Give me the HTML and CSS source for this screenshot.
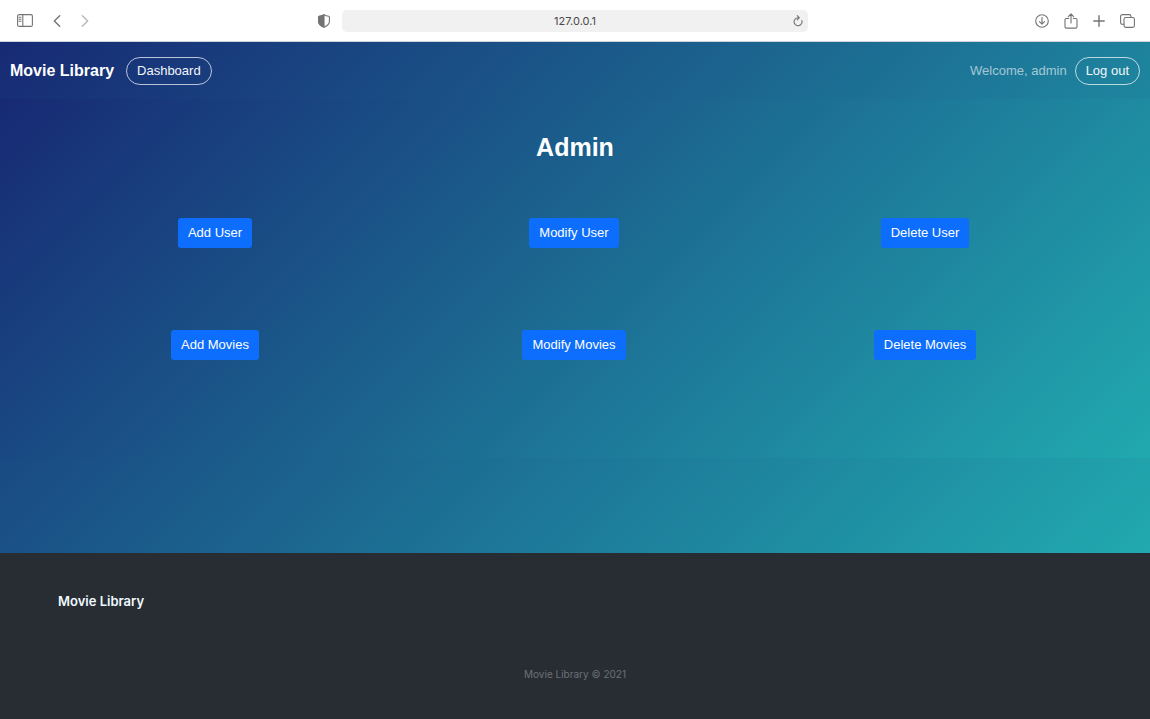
FILE: index.html
```html
<!DOCTYPE html>
<html lang="en">
<head>
<meta charset="utf-8">
<title>Movie Library</title>
<link rel="stylesheet" href="styles.css">
</head>
<body>
<div class="toolbar">
  <div class="tools tools-left">
    <button class="tool" aria-label="Sidebar"><svg width="16" height="13" viewBox="0 0 16 13"><rect x=".6" y=".6" width="14.8" height="11.8" rx="1.5"/><path d="M5.8 .6v11.8M2 3.2h2M2 5.2h2M2 7.2h2"/></svg></button>
    <div class="history">
      <button class="tool" aria-label="Back"><svg width="8" height="12" viewBox="0 0 8 12"><path class="bold" d="M6.7.8 1.3 6l5.4 5.2"/></svg></button>
      <button class="tool tool-off" aria-label="Forward"><svg width="8" height="12" viewBox="0 0 8 12"><path class="bold" d="M1.3.8 6.7 6l-5.4 5.2"/></svg></button>
    </div>
    <button class="tool shield" aria-label="Privacy report"><svg width="12" height="14" viewBox="0 0 12 14"><path d="M6 .8C4.700 1.700 2.800 2.200 1.200 2.300.7 2.400.6 2.600.6 3.100v4.500c0 2.800 2.300 4.400 5.400 5.700 3.100-1.300 5.400-2.900 5.400-5.700V3.100c0-.5-.1-.7-.6-.8C9.200 2.200 7.300 1.700 6 .8Z"/><path class="solid" d="M6 .8C4.700 1.700 2.800 2.200 1.200 2.300.7 2.400.6 2.600.6 3.100v4.500c0 2.800 2.300 4.400 5.400 5.700Z"/></svg></button>
  </div>
  <div class="address">
    <input class="url" type="text" value="127.0.0.1" aria-label="Address">
    <button class="tool reload" aria-label="Reload"><svg width="10" height="12" viewBox="0 0 10 12"><path d="M8.900 5.600A4 4 0 1 1 5 2.700h1.300M4.200.6l2.100 2.100-2.100 2.100"/></svg></button>
  </div>
  <div class="tools tools-right">
    <button class="tool" aria-label="Downloads"><svg width="14" height="14" viewBox="0 0 14 14"><circle cx="7" cy="7" r="6.300"/><path d="M7 3.600v6.400M4.500 7.700 7 10.200l2.500-2.500"/></svg></button>
    <button class="tool" aria-label="Share"><svg width="14" height="16" viewBox="0 0 14 16"><path d="M4.700 5.500H2.300c-.8 0-1.300.5-1.300 1.300v7c0 .8.500 1.300 1.300 1.300h9.400c.8 0 1.300-.5 1.300-1.300v-7c0-.8-.5-1.300-1.300-1.300H9.300M7 10V1M4.300 3.600 7 .9l2.700 2.700"/></svg></button>
    <button class="tool" aria-label="New tab"><svg width="12" height="12" viewBox="0 0 12 12"><path class="bold" d="M6 .8v10.400M.8 6h10.400"/></svg></button>
    <button class="tool" aria-label="Tabs"><svg width="15" height="14" viewBox="0 0 15 14"><rect x="4" y="3.500" width="10.400" height="9.900" rx="1.800"/><path d="M4 10.200H2.400C1.200 10.200.6 9.600.6 8.400V2.400C.6 1.200 1.200.6 2.400.6h6.800c1.200 0 1.800.6 1.800 1.800v1.100"/></svg></button>
  </div>
</div>
<div class="page">
  <header class="navbar">
    <a class="brand" href="#">Movie Library</a>
    <a class="pill" href="#">Dashboard</a>
    <div class="account">
      <span class="welcome">Welcome, admin</span>
      <a class="pill" href="#">Log out</a>
    </div>
  </header>
  <main class="panel">
    <h1 class="heading">Admin</h1>
    <div class="actions">
      <button class="btn">Add User</button>
      <button class="btn">Modify User</button>
      <button class="btn">Delete User</button>
      <button class="btn">Add Movies</button>
      <button class="btn">Modify Movies</button>
      <button class="btn">Delete Movies</button>
    </div>
  </main>
</div>
<footer class="footer">
  <h2 class="footer-title">Movie Library</h2>
  <p class="copyright">Movie Library © 2021</p>
</footer>
</body>
</html>
```
FILE: styles.css
```css
* { box-sizing: border-box; }

body {
  margin: 0;
  min-height: 100vh;
  display: flex;
  flex-direction: column;
  background: #282d34;
  font-family: "Liberation Sans", Arial, sans-serif;
  font-size: 13px;
  line-height: 20px;
}

a { text-decoration: none; }

/* Browser toolbar */
.toolbar {
  display: grid;
  grid-template-columns: 1fr 466px 1fr;
  align-items: center;
  height: 42px;
  background: #fff;
  border-bottom: 1px solid #d0d4d8;
}

.tools { display: flex; align-items: center; }
.tools-left { padding: 0 12px 0 17px; gap: 20px; }
.tools-right { padding-right: 15px; gap: 15px; justify-content: flex-end; }
.history { display: flex; gap: 20px; }
.shield { margin-left: auto; }

.tool {
  display: flex;
  padding: 0;
  border: 0;
  background: none;
  color: #747474;
}
.tool-off { color: #b8b8b8; }
.tool svg {
  fill: none;
  stroke: currentColor;
  stroke-width: 1.1;
  stroke-linecap: round;
  stroke-linejoin: round;
}
.tool .bold { stroke-width: 1.4; }
.tool .solid { fill: currentColor; }

.address {
  display: flex;
  align-items: center;
  height: 22px;
  padding: 0 5px 0 15px;
  border-radius: 5px;
  background: #f1f1f1;
}
.url {
  flex: 1;
  min-width: 0;
  border: 0;
  padding: 0;
  background: none;
  color: #4a4a4a;
  font: 11px/20px Inter, sans-serif;
  text-align: center;
}

/* Page */
.page,
.panel { background: linear-gradient(135deg, #172a74, #21a9af); }

.page { flex: 1; }

.navbar {
  display: flex;
  align-items: center;
  height: 57px;
  padding: 0 10px;
}
.brand {
  margin-right: 12px;
  color: #fff;
  font-size: 16px;
  font-weight: 700;
}
.pill {
  padding: 3px 10px;
  border: 1px solid rgba(255, 255, 255, 0.7);
  border-radius: 14px;
  color: #f2f6fa;
}
.account {
  display: flex;
  align-items: center;
  gap: 8px;
  margin-left: auto;
}
.welcome { color: rgba(255, 255, 255, 0.6); }

.panel { padding: 32px 58px 98px 40px; }
.heading {
  margin: 0 0 55px;
  padding-left: 18px;
  color: #fff;
  font-size: 25px;
  line-height: 32px;
  text-align: center;
}
.actions {
  display: grid;
  grid-template-columns: 175fr 184fr 167fr;
  justify-items: center;
  row-gap: 82px;
}
.btn {
  height: 30px;
  padding: 0 10px;
  border: 0;
  border-radius: 3px;
  background: #0d6efd;
  color: #fff;
  font: inherit;
}

/* Footer */
.footer {
  padding: 38px 58px 35px;
  font-family: Inter, sans-serif;
}
.footer-title {
  margin: 0 0 53px;
  color: #f0f9ff;
  font-size: 13px;
  font-weight: 600;
}
.copyright {
  margin: 0;
  color: #6c7075;
  font-size: 10px;
  text-align: center;
}
```
